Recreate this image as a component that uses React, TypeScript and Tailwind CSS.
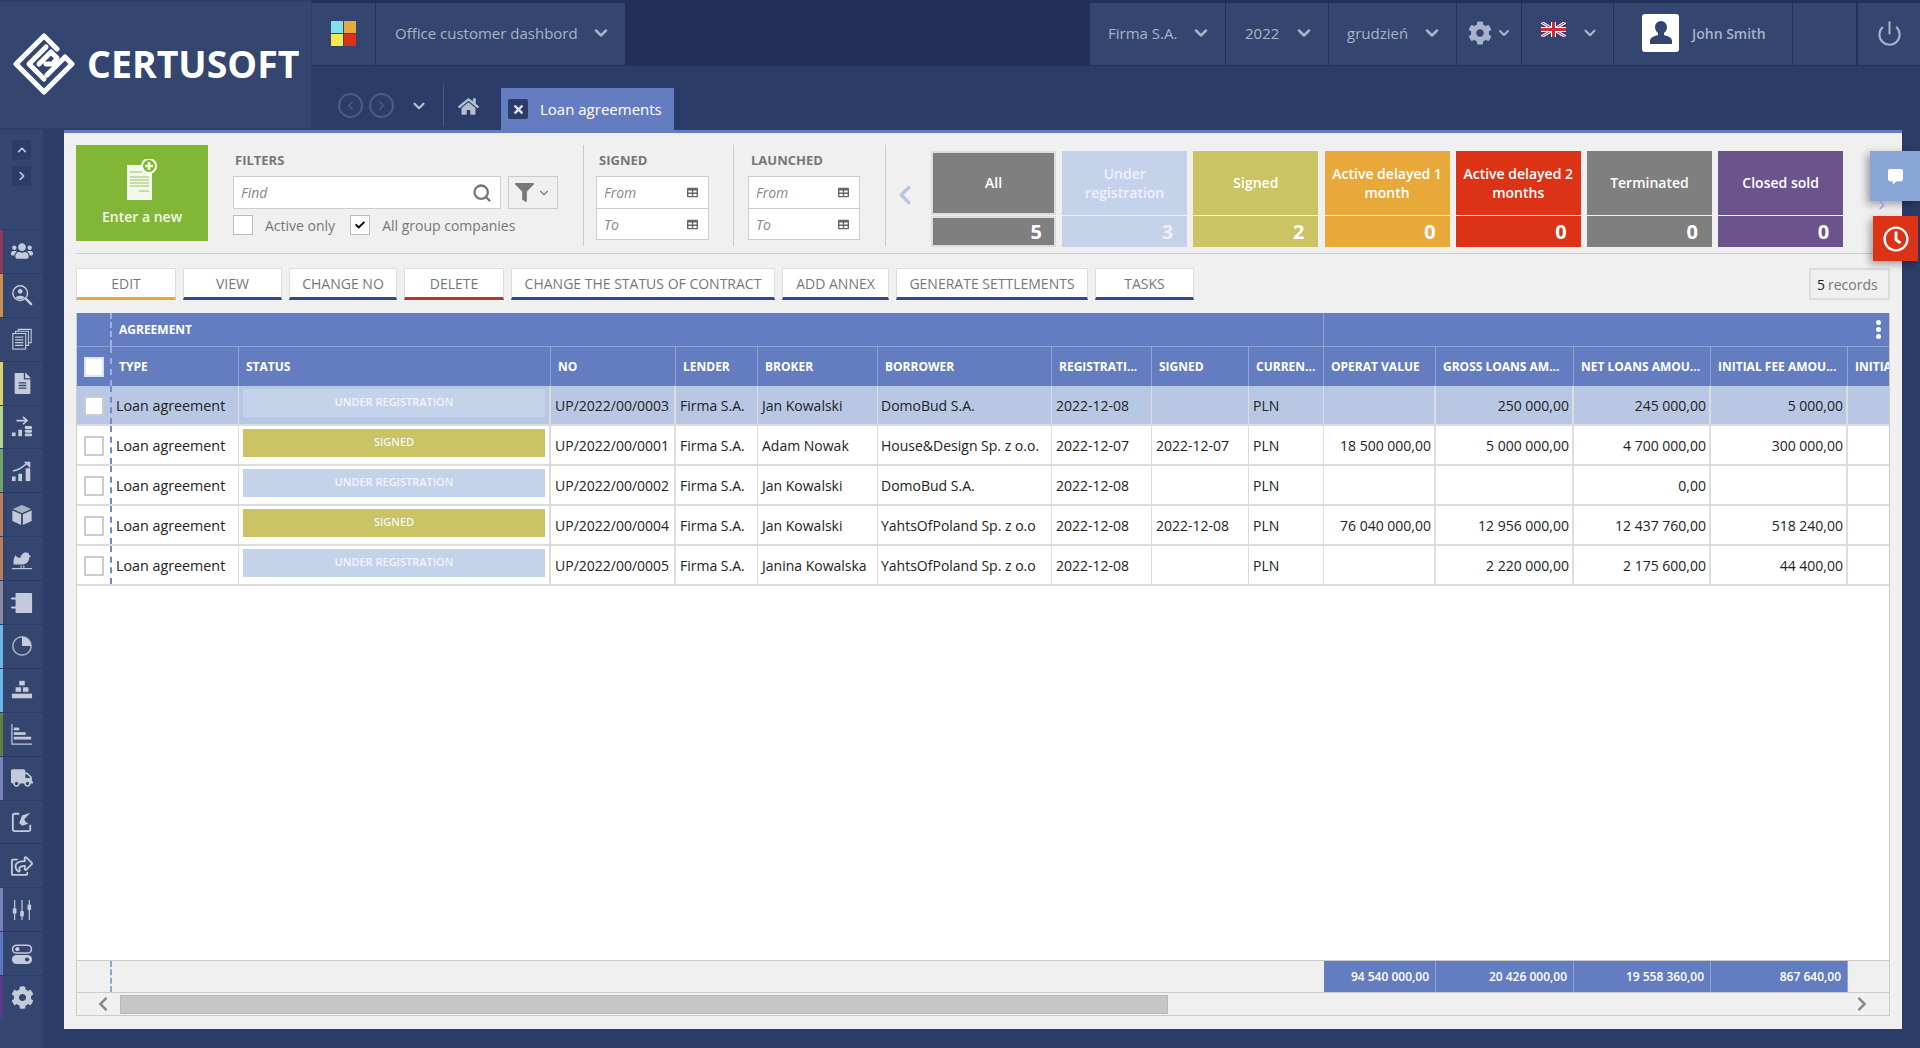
import { ChevronDown, ChevronLeft, ChevronRight, Power, Search } from 'lucide-react'
import { FaCheck, FaChevronLeft, FaChevronRight, FaChevronUp, FaCog, FaCommentAlt, FaFileAlt, FaFilter, FaHome, FaRegClock, FaRegShareSquare, FaTable, FaTimes, FaTruck, FaUsers } from 'react-icons/fa'
import type { ReactNode } from 'react'

const cols = 'grid grid-cols-[35px_127px_312px_125px_82px_120px_174px_100px_97px_75px_112px_138px_137px_137px_42px]'

function LogoMark() {
  return (
    <svg width="62" height="62" viewBox="0 0 62 62" fill="none" stroke="#fff" strokeWidth="5" strokeLinejoin="round" strokeLinecap="round">
      <path d="M44 16 L31 3 L3 31 L31 59 L59 31 L52 24 L34 42" />
      <path d="M33 14 L16 31 L31 46" />
      <path d="M26 31 L38 19 L44 25 L40 31 L33 31" />
    </svg>
  )
}

function FlagUk() {
  return (
    <svg width="25" height="15" viewBox="0 0 50 30" className="mb-[8px]">
      <rect width="50" height="30" fill="#2b3f7e" />
      <path d="M0 0 L50 30 M50 0 L0 30" stroke="#fff" strokeWidth="6" />
      <path d="M0 0 L50 30 M50 0 L0 30" stroke="#c8303c" strokeWidth="2" />
      <path d="M25 0 V30 M0 15 H50" stroke="#fff" strokeWidth="10" />
      <path d="M25 0 V30 M0 15 H50" stroke="#c8303c" strokeWidth="6" />
    </svg>
  )
}

function TopBox({ children, className }: { children: ReactNode; className: string }) {
  return <div className={`flex h-[62px] items-center bg-[#34466f] pb-[2px] text-[#a9b2c9] ${className}`}>{children}</div>
}

const ic = { width: 22, height: 22, viewBox: '0 0 24 24', fill: '#c3cad9' }

// sidebar icons, the ones the packs don't have are drawn here
const navIcons: ReactNode[] = [
  <FaUsers size={22} />,
  <svg {...ic}><circle cx="10" cy="10" r="8" fill="none" stroke="#c3cad9" strokeWidth="1.6" /><circle cx="10" cy="8" r="2.6" /><path d="M5 15c1-3 9-3 10 0-2 2-8 2-10 0z" /><path d="M16 16l6 6" stroke="#c3cad9" strokeWidth="2.6" strokeLinecap="round" /></svg>,
  <svg {...ic} fill="none" stroke="#c3cad9" strokeWidth="1.2"><rect x="2" y="6" width="14" height="17" /><path d="M5 6V3.5h14V19h-3M8 3.5V1.500h14V16h-3" /><path d="M4.500 10h9M4.500 13h9M4.500 16h9M4.500 19h9" /></svg>,
  <FaFileAlt size={21} />,
  <svg {...ic}><path d="M6 5h11M13 1l4.500 4L13 9" fill="none" stroke="#c3cad9" strokeWidth="1.8" /><rect x="1" y="18" width="4" height="4" /><rect x="8" y="15" width="4" height="7" /><rect x="15" y="11" width="8" height="3.2" rx="1.2" /><rect x="15" y="15" width="8" height="3.2" rx="1.2" /><rect x="15" y="19" width="8" height="3.2" rx="1.2" /></svg>,
  <svg {...ic}><rect x="1" y="18" width="4" height="5" /><rect x="8" y="15" width="4" height="8" /><rect x="16" y="9" width="5" height="14" /><path d="M2 12c6-1 11-4 16-9" fill="none" stroke="#c3cad9" strokeWidth="1.8" /><path d="M14 2h7v7z" /></svg>,
  <svg {...ic}><path d="M12 1l10 4.500L12 10 2 5.500z" opacity=".8" /><path d="M1.500 7L11 11.300V23L1.500 18.500zM22.500 7L13 11.300V23l9.500-4.500z" /></svg>,
  <svg {...ic} fill="none"><path d="M1 22.500h22" stroke="#c3cad9" strokeWidth="1.3" /><path d="M3 18c-1-4 1-9 2-10 1 2 3 3 5 3 1-4 4-7 7-6 2 0 3 2 3 3l2 1-2 1c0 5-4 8-8 8H7z" fill="#c3cad9" /><path d="M11 19v3M14 19v3" stroke="#c3cad9" strokeWidth="1.2" /></svg>,
  <svg {...ic}><path d="M5 1h17c1 0 1 1 1 1v20c0 1-1 1-1 1H5z" /><path d="M1 7h6M1 17h6" stroke="#c3cad9" strokeWidth="2.2" strokeLinecap="round" /></svg>,
  <svg {...ic}><circle cx="12" cy="12" r="10" fill="none" stroke="#c3cad9" strokeWidth="1.8" opacity=".75" /><path d="M12 2a10 10 0 0 1 10 10H12z" /></svg>,
  <svg {...ic}><rect x="9" y="2" width="6" height="5" /><rect x="5" y="9" width="6" height="5" /><rect x="13" y="9" width="6" height="5" /><rect x="1" y="16" width="22" height="5" /></svg>,
  <svg {...ic}><path d="M1 1v22h22" fill="none" stroke="#c3cad9" strokeWidth="1.3" /><rect x="3" y="5" width="6" height="3" /><rect x="3" y="10" width="13" height="3" /><rect x="3" y="15" width="19" height="3" /></svg>,
  <FaTruck size={22} />,
  <svg {...ic} fill="none"><path d="M9 3H4a2 2 0 0 0-2 2v15a2 2 0 0 0 2 2h15a2 2 0 0 0 2-2v-5" stroke="#c3cad9" strokeWidth="2" /><path d="M21 2l-9 3-3 8 3 3 7-2-3-2-1.500-3z" fill="#c3cad9" /></svg>,
  <FaRegShareSquare size={22} />,
  <svg {...ic}><path d="M4 1v22M12 1v22M20 1v22" stroke="#c3cad9" strokeWidth="1.3" /><rect x="2" y="10" width="4" height="6" rx="1" /><rect x="10" y="13" width="4" height="6" rx="1" /><rect x="18" y="6" width="4" height="6" rx="1" /></svg>,
  <svg {...ic}><rect x="1.700" y="2.500" width="20.600" height="8.500" rx="4.200" fill="none" stroke="#c3cad9" strokeWidth="1.700" /><circle cx="7" cy="6.700" r="2.300" /><rect x="1" y="13" width="22" height="10" rx="5" /><circle cx="17.500" cy="18" r="2.300" fill="#34466f" /></svg>,
  <FaCog size={23} />,
]

const stripes = ['bg-[#8a3a5a]', 'bg-[#c8914e]', 'bg-transparent', 'bg-[#d9d06e]', 'bg-[#b7d48f]', 'bg-[#6fa46f]', 'bg-[#b87f5a]', 'bg-[#b87f5a]', 'bg-[#8a8a9a]', 'bg-[#6bb7e8]', 'bg-[#6bb7e8]', 'bg-[#5f8040]', 'bg-[#7a80b8]', 'bg-transparent', 'bg-transparent', 'bg-[#7a80b8]', 'bg-[#5a78c0]', 'bg-[#5a3a8a]']

function Sidebar() {
  return (
    <div className="flex w-[44px] shrink-0 flex-col border-r border-[#2b3c68] bg-[#34466f]">
      <div className="flex h-[99px] flex-col items-center gap-[6px] pt-[10px]">
        <div className="flex h-[20px] w-[19px] items-center justify-center rounded-[2px] bg-[#2b3c68] text-[#c3cad9]"><FaChevronUp size={10} /></div>
        <div className="flex h-[20px] w-[19px] items-center justify-center rounded-[2px] bg-[#2b3c68] text-[#c3cad9]"><FaChevronRight size={10} /></div>
      </div>
      {navIcons.map((icon, i) => (
        <div key={i} className="flex h-[43.900px] items-stretch border-t border-[#2b3c68] text-[#c3cad9]">
          <div className={`w-[3px] ${stripes[i]}`} />
          <div className="flex flex-1 items-center justify-center pr-[2px]">{icon}</div>
        </div>
      ))}
    </div>
  )
}

function DateRange({ label, className }: { label: string; className: string }) {
  return (
    <div className={`flex flex-col ${className}`}>
      <div className="flex h-[31px] items-center pl-[3px] text-[13px] font-bold text-[#777]">{label}</div>
      <div className="flex h-[33px] items-center justify-between border border-[#ccc] bg-white pl-[7px] pr-[10px] text-[14px] italic text-[#888]">
        From <FaTable size={11} className="text-[#666]" />
      </div>
      <div className="flex h-[31px] items-center justify-between border border-t-0 border-[#ccc] bg-white pl-[7px] pr-[10px] text-[14px] italic text-[#888]">
        To <FaTable size={11} className="text-[#666]" />
      </div>
    </div>
  )
}

const tiles = [
  { name: 'All', n: 5, bg: 'bg-[#7f7f7f] text-white', ring: 'outline-2 -outline-offset-2 outline-[#ddd]' },
  { name: 'Under registration', n: 3, bg: 'bg-[#c4d3ea] text-[#eef2f8]', ring: '' },
  { name: 'Signed', n: 2, bg: 'bg-[#cbc364] text-white', ring: '' },
  { name: 'Active delayed 1 month', n: 0, bg: 'bg-[#e8a93a] text-white', ring: '' },
  { name: 'Active delayed 2 months', n: 0, bg: 'bg-[#dc3316] text-white', ring: '' },
  { name: 'Terminated', n: 0, bg: 'bg-[#7f7f7f] text-white', ring: '' },
  { name: 'Closed sold', n: 0, bg: 'bg-[#6b548b] text-white', ring: '' },
]

const actions = [
  { t: 'EDIT', w: 'w-[100px]', b: 'border-b-[#e8a93a]' },
  { t: 'VIEW', w: 'w-[99px]', b: 'border-b-[#2f4a8c]' },
  { t: 'CHANGE NO', w: 'w-[108px]', b: 'border-b-[#2f4a8c]' },
  { t: 'DELETE', w: 'w-[100px]', b: 'border-b-[#b93525]' },
  { t: 'CHANGE THE STATUS OF CONTRACT', w: 'w-[264px]', b: 'border-b-[#2f4a8c]' },
  { t: 'ADD ANNEX', w: 'w-[107px]', b: 'border-b-[#2f4a8c]' },
  { t: 'GENERATE SETTLEMENTS', w: 'w-[192px]', b: 'border-b-[#2f4a8c]' },
  { t: 'TASKS', w: 'w-[99px]', b: 'border-b-[#2f4a8c]' },
]

const headers = ['TYPE', 'STATUS', 'NO', 'LENDER', 'BROKER', 'BORROWER', 'REGISTRATI...', 'SIGNED', 'CURREN...', 'OPERAT VALUE', 'GROSS LOANS AM...', 'NET LOANS AMOU...', 'INITIAL FEE AMOU...', 'INITIA']

const rows = [
  { status: 'UNDER REGISTRATION', no: 'UP/2022/00/0003', broker: 'Jan Kowalski', borrower: 'DomoBud S.A.', reg: '2022-12-08', signed: '', op: '', gross: '250 000,00', net: '245 000,00', fee: '5 000,00' },
  { status: 'SIGNED', no: 'UP/2022/00/0001', broker: 'Adam Nowak', borrower: 'House&Design Sp. z o.o.', reg: '2022-12-07', signed: '2022-12-07', op: '18 500 000,00', gross: '5 000 000,00', net: '4 700 000,00', fee: '300 000,00' },
  { status: 'UNDER REGISTRATION', no: 'UP/2022/00/0002', broker: 'Jan Kowalski', borrower: 'DomoBud S.A.', reg: '2022-12-08', signed: '', op: '', gross: '', net: '0,00', fee: '' },
  { status: 'SIGNED', no: 'UP/2022/00/0004', broker: 'Jan Kowalski', borrower: 'YahtsOfPoland Sp. z o.o', reg: '2022-12-08', signed: '2022-12-08', op: '76 040 000,00', gross: '12 956 000,00', net: '12 437 760,00', fee: '518 240,00' },
  { status: 'UNDER REGISTRATION', no: 'UP/2022/00/0005', broker: 'Janina Kowalska', borrower: 'YahtsOfPoland Sp. z o.o', reg: '2022-12-08', signed: '', op: '', gross: '2 220 000,00', net: '2 175 600,00', fee: '44 400,00' },
]

const cell = 'flex items-center border-r border-[#dcdcdc] pt-[1px] overflow-hidden whitespace-nowrap'
const cellR = 'flex items-center justify-end border-r-2 border-[#dcdcdc] px-[3px] pt-[1px] overflow-hidden whitespace-nowrap'
const hcell = 'flex items-center border-r border-[#8ea3d8] px-[7px] overflow-hidden whitespace-nowrap'

function Table() {
  return (
    <div className="flex h-[703px] flex-col overflow-hidden border-x border-b border-[#ccc] bg-white">
      <div className="grid h-[34px] shrink-0 grid-cols-[35px_1212px_1fr] border-b border-[#8ea3d8] bg-[#647dc0] text-[12px] font-bold text-white">
        <div className="border-r-2 border-dashed border-[#9db0e0]" />
        <div className="flex items-center border-r border-[#8ea3d8] pl-[7px]">AGREEMENT</div>
        <div className="flex items-center justify-end pr-[8px]">
          <div className="flex flex-col gap-[2px]">
            <span className="h-[5px] w-[5px] rounded-full bg-white" />
            <span className="h-[5px] w-[5px] rounded-full bg-white" />
            <span className="h-[5px] w-[5px] rounded-full bg-white" />
          </div>
        </div>
      </div>
      <div className={`${cols} h-[39px] shrink-0 bg-[#647dc0] text-[12px] font-bold text-white`}>
        <div className="flex items-center justify-center border-r-2 border-dashed border-[#9db0e0]">
          <span className="h-[20px] w-[20px] border-2 border-[#dfe4f2] bg-white" />
        </div>
        {headers.map(h => <div key={h} className={hcell}>{h}</div>)}
      </div>
      {rows.map((r, i) => {
        const under = r.status !== 'SIGNED'
        return (
          <div key={r.no} className={`${cols} h-[40px] shrink-0 border-b-2 border-[#dcdcdc] text-[14px] text-[#222] ${i === 0 ? 'bg-[#b8c7e4]' : 'bg-white'}`}>
            <div className="flex items-center justify-center border-r-2 border-dashed border-[#6f8bd0] pt-[1px]">
              <span className="h-[20px] w-[20px] border-2 border-[#ccc] bg-white" />
            </div>
            <div className={`${cell} pl-[4px] text-[14.300px]`}>Loan agreement</div>
            <div className="border-r-2 border-[#dcdcdc] px-[4px] pt-[3px]">
              <div className={`flex h-[28px] items-center justify-center pb-[2px] text-[11px] font-semibold text-[#f2f5fa] ${under ? 'bg-[#c4d3ea]' : 'bg-[#cbc364]'}`}>{r.status}</div>
            </div>
            <div className="flex items-center overflow-hidden whitespace-nowrap border-r-2 border-[#dcdcdc] pl-[4px] pt-[1px]">{r.no}</div>
            <div className={`${cell} pl-[4px]`}>Firma S.A.</div>
            <div className={`${cell} pl-[4px]`}>{r.broker}</div>
            <div className={`${cell} pl-[3px]`}>{r.borrower}</div>
            <div className={`${cell} pl-[4px]`}>{r.reg}</div>
            <div className={`${cell} pl-[4px]`}>{r.signed}</div>
            <div className={`${cell} pl-[4px]`}>PLN</div>
            <div className={cellR}>{r.op}</div>
            <div className={cellR}>{r.gross}</div>
            <div className={cellR}>{r.net}</div>
            <div className={cellR}>{r.fee}</div>
            <div />
          </div>
        )
      })}
      <div className="flex-1" />
      <div className={`${cols} h-[33px] shrink-0 border-y border-[#ccc] bg-[#f0f0f0] text-[12px] font-semibold text-white`}>
        <div className="border-r-2 border-dashed border-[#8aa6d6]" />
        <div className="col-span-9" />
        {['94 540 000,00', '20 426 000,00', '19 558 360,00', '867 640,00'].map(v => (
          <div key={v} className="flex items-center justify-end border-r border-[#8ea3d8] bg-[#647dc0] pr-[6px]">{v}</div>
        ))}
      </div>
      <div className="flex h-[22px] shrink-0 items-center bg-[#f0f0f0] text-[#888]">
        <div className="flex w-[43px] justify-center pl-[8px]"><FaChevronLeft size={16} /></div>
        <div className="h-[19px] w-[1048px] border border-[#bbb] bg-[#c6c6c6]" />
        <div className="flex flex-1 justify-end pr-[19px]"><FaChevronRight size={16} /></div>
      </div>
    </div>
  )
}

export default function App() {
  return (
    <div className="relative h-[1048px] w-[1920px] overflow-hidden bg-[#2b3c68] font-['Open_Sans',sans-serif]">
      <div className="flex h-[130px]">
        <div className="mt-[2px] flex h-[126px] w-[312px] shrink-0 items-center gap-[12px] border-r border-[#2b3c68] bg-[#34466f] pb-[2px] pl-[13px]">
          <LogoMark />
          <span className="text-[37.500px] font-bold leading-none text-white">CERTUSOFT</span>
        </div>
        <div className="flex min-w-0 flex-1 flex-col">
          <div className="flex h-[66px] items-start justify-between border-b border-[#222f58] bg-[#222f58] pt-[3px]">
            <div className="flex gap-[1px]">
              <TopBox className="w-[63px] justify-center">
                <div className="grid grid-cols-[12px_12px] grid-rows-[12px_12px] gap-[1px]">
                  <span className="bg-[#7fe0f0]" />
                  <span className="bg-[#e8a93a]" />
                  <span className="bg-[#f5ea4a]" />
                  <span className="bg-[#dc3316]" />
                </div>
              </TopBox>
              <TopBox className="w-[249px] pl-[19px] text-[15px]">
                Office customer dashbord <ChevronDown size={20} strokeWidth={3} className="ml-[13px]" />
              </TopBox>
            </div>
            <div className="flex gap-[1px]">
              <TopBox className="w-[135px] pl-[18px] text-[15px]">Firma S.A. <ChevronDown size={20} strokeWidth={3} className="ml-[14px]" /></TopBox>
              <TopBox className="w-[102px] pl-[19px] text-[15px]">2022 <ChevronDown size={20} strokeWidth={3} className="ml-[15px]" /></TopBox>
              <TopBox className="w-[127px] pl-[18px] text-[15px]">grudzień <ChevronDown size={20} strokeWidth={3} className="ml-[14px]" /></TopBox>
              <TopBox className="w-[64px] pl-[11px]"><FaCog size={24} /><ChevronDown size={16} strokeWidth={3} className="ml-[4px]" /></TopBox>
              <TopBox className="w-[91px] pl-[19px]"><FlagUk /><ChevronDown size={18} strokeWidth={3} className="ml-[15px]" /></TopBox>
              <TopBox className="w-[178px] pl-[28px] text-[14px] font-semibold">
                <div className="mr-[13px] flex h-[38px] w-[37px] items-center justify-center rounded-[3px] bg-white">
                  <svg width="24" height="26" viewBox="0 0 24 26" fill="#34466f"><path d="M12 1a6 6 0 0 1 6 6c0 3-1.500 5-3 6v2c3 1 8 2 8 6v3H1v-3c0-4 5-5 8-6v-2c-1.500-1-3-3-3-6a6 6 0 0 1 6-6z" /></svg>
                </div>
                John Smith
              </TopBox>
              <TopBox className="w-[63px]"><span /></TopBox>
              <TopBox className="ml-[1px] w-[62px] justify-center"><Power size={27} strokeWidth={1.8} /></TopBox>
            </div>
          </div>
          <div className="flex h-[64px] items-start pl-[26px] pt-[22px]">
            <div className="mt-[5px] flex h-[25px] w-[25px] items-center justify-center rounded-full border-2 border-[#4a5c85] text-[#4a5c85]"><ChevronLeft size={15} /></div>
            <div className="ml-[6px] mt-[5px] flex h-[25px] w-[25px] items-center justify-center rounded-full border-2 border-[#4a5c85] text-[#4a5c85]"><ChevronRight size={15} /></div>
            <ChevronDown size={18} strokeWidth={3} className="ml-[16px] mt-[9px] text-[#b4bccf]" />
            <div className="ml-[15px] mt-[-3px] h-[40px] w-px bg-[#4a5c85]" />
            <FaHome size={21} className="ml-[14px] mt-[8px] text-[#b4bccf]" />
            <div className="ml-[22px] flex h-[42px] w-[173px] items-center bg-[#647dc0] pl-[7px] text-[15px] text-white">
              <span className="mr-[12px] flex h-[20px] w-[20px] items-center justify-center rounded-[2px] bg-[#2b3c68] text-[#dde2ee]"><FaTimes size={13} /></span>
              Loan agreements
            </div>
          </div>
        </div>
      </div>

      <div className="flex h-[918px]">
        <Sidebar />
        <div className="ml-[20px] flex h-[899px] w-[1838px] flex-col border-t-[3px] border-[#647dc0] bg-[#f0f0f0] px-[12px] pt-[12px]">
          <div className="flex h-[109px] items-start border-b border-[#ccc]">
            <div className="flex h-[96px] w-[132px] shrink-0 flex-col items-center bg-[#82b636] pt-[14px] text-[14px] font-semibold text-[#f4f8ea]">
              <svg width="30" height="41" viewBox="0 0 30 41">
                <rect x="0" y="6" width="25" height="35" fill="#f4f8ea" />
                <path d="M3 13h12M3 18h19M3 21h19M3 24h19M3 27h19M12 32h10" stroke="#b8d48c" strokeWidth="1.500" />
                <circle cx="22" cy="7" r="7" fill="#82b636" stroke="#f4f8ea" strokeWidth="2" />
                <path d="M22 3v8M18 7h8" stroke="#f4f8ea" strokeWidth="2.500" />
              </svg>
              <span className="mt-[6px]">Enter a new</span>
            </div>
            <div className="ml-[25px] flex w-[325px] shrink-0 flex-col">
              <div className="flex h-[31px] items-center pl-[2px] text-[13px] font-bold text-[#777]">FILTERS</div>
              <div className="flex gap-[7px]">
                <div className="flex h-[33px] w-[268px] items-center justify-between border border-[#ccc] bg-white pl-[7px] pr-[8px] text-[14px] italic text-[#888]">
                  Find <Search size={20} strokeWidth={2.8} className="text-[#777]" />
                </div>
                <div className="flex h-[33px] w-[50px] items-center justify-center gap-[3px] border border-[#ccc] text-[#777]">
                  <FaFilter size={19} /><ChevronDown size={14} />
                </div>
              </div>
              <div className="mt-[6px] flex h-[20px] items-center text-[14px] text-[#777]">
                <span className="mr-[12px] h-[20px] w-[20px] border border-[#bbb] bg-white" />
                <span className="mr-[15px]">Active only</span>
                <span className="mr-[12px] flex h-[20px] w-[20px] items-center justify-center border border-[#bbb] bg-white text-[#111]"><FaCheck size={10} /></span>
                <span>All group companies</span>
              </div>
            </div>
            <div className="ml-[25px] h-[101px] w-px bg-[#ccc]" />
            <DateRange label="SIGNED" className="ml-[12px] w-[113px]" />
            <div className="ml-[24px] h-[101px] w-px bg-[#ccc]" />
            <DateRange label="LAUNCHED" className="ml-[14px] w-[112px]" />
            <div className="ml-[25px] h-[101px] w-px bg-[#ccc]" />
            <ChevronLeft size={30} strokeWidth={2.6} className="ml-[4px] mt-[35px] w-[30px] shrink-0 text-[#b5c5e2]" />
            <div className="ml-[11px] mt-[6px] flex gap-[6.200px]">
              {tiles.map(t => (
                <div key={t.name} className="flex w-[125px] flex-col gap-[1px]">
                  <div className={`flex h-[64px] items-center justify-center px-[6px] pb-[1px] text-center text-[14px] font-semibold leading-[19px] ${t.bg} ${t.ring}`}>{t.name}</div>
                  <div className={`flex h-[31px] items-center justify-end pr-[14px] text-[20px] font-bold ${t.bg} ${t.ring}`}>{t.n}</div>
                </div>
              ))}
            </div>
          </div>

          <div className="flex h-[59px] items-start justify-between pt-[14px]">
            <div className="flex gap-[7px]">
              {actions.map(a => (
                <div key={a.t} className={`flex h-[32px] items-center justify-center whitespace-nowrap border border-b-[3px] border-[#ddd] bg-white text-[14px] text-[#777] ${a.w} ${a.b}`}>{a.t}</div>
              ))}
            </div>
            <div className="flex h-[32px] w-[81px] items-center border-2 border-[#ddd] pl-[6px] text-[14px] text-[#777]">
              <span className="mr-[3px] text-[#222]">5</span> records
            </div>
          </div>

          <Table />
        </div>
      </div>

      <div className="absolute right-0 top-[151px] flex h-[50px] w-[50px] items-center justify-center bg-[#8aa6d6] text-white shadow-[-3px_3px_8px_rgba(0,0,0,0.35)]">
        <FaCommentAlt size={15} />
      </div>
      <ChevronRight size={14} strokeWidth={3} className="absolute right-[31px] top-[198px] text-[#8aa6d6]" />
      <div className="absolute right-[2px] top-[216px] flex h-[45px] w-[45px] items-center justify-center bg-[#dc3316] text-white shadow-[-3px_3px_8px_rgba(0,0,0,0.35)]">
        <FaRegClock size={26} />
      </div>
    </div>
  )
}
